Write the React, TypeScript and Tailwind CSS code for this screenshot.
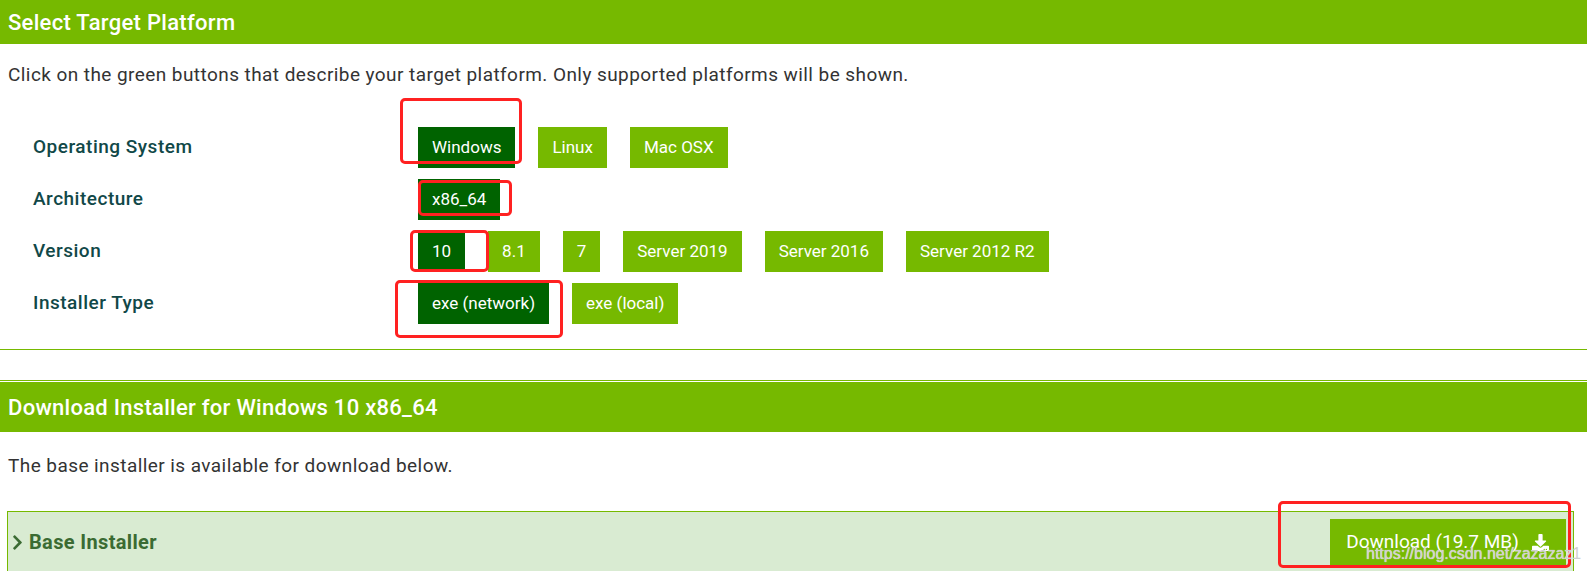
import { FaDownload, FaChevronRight } from 'react-icons/fa';

type Opt = { label: string; active?: boolean };

const rows: { label: string; options: Opt[] }[] = [
  {
    label: 'Operating System',
    options: [{ label: 'Windows', active: true }, { label: 'Linux' }, { label: 'Mac OSX' }],
  },
  { label: 'Architecture', options: [{ label: 'x86_64', active: true }] },
  {
    label: 'Version',
    options: [
      { label: '10', active: true },
      { label: '8.1' },
      { label: '7' },
      { label: 'Server 2019' },
      { label: 'Server 2016' },
      { label: 'Server 2012 R2' },
    ],
  },
  {
    label: 'Installer Type',
    options: [{ label: 'exe (network)', active: true }, { label: 'exe (local)' }],
  },
];

// Marcações vermelhas da captura
const marks = [
  'left-[400px] top-[98px] w-[122px] h-[66px]',
  'left-[418px] top-[180px] w-[94px] h-[36px]',
  'left-[410px] top-[230px] w-[79px] h-[42px]',
  'left-[395px] top-[280px] w-[168px] h-[58px]',
  'left-[1278px] top-[501px] w-[293px] h-[67px]',
];

export default function App() {
  return (
    <div className="relative w-[1587px] h-[571px] overflow-hidden bg-white font-['Roboto',sans-serif]">
      {/* Header */}
      <div className="h-[44px] bg-[#76b900] flex items-center px-2 text-white text-[22px] tracking-[0.3px] font-medium">
        Select Target Platform
      </div>

      {/* Seleção */}
      <div className="border-b border-[#76b900] pb-[25px]">
        <p className="mt-[19px] px-2 text-[19px] tracking-[0.43px] leading-[24px] text-[#333]">
          Click on the green buttons that describe your target platform. Only supported platforms will be shown.
        </p>
        <div className="mt-[40px] flex flex-col gap-[11px]">
          {rows.map((row) => (
            <div key={row.label} className="flex items-center h-[41px]">
              <div className="w-[418px] pl-[33px] text-[19px] tracking-[0.5px] font-medium text-[#114848]">
                {row.label}
              </div>
              <div className="flex gap-[23px] h-full">
                {row.options.map((opt) => (
                  <button
                    key={opt.label}
                    className={`h-full px-[14px] text-white text-[17px] ${
                      opt.active ? 'bg-[#006300]' : 'bg-[#76b900]'
                    }`}
                  >
                    {opt.label}
                  </button>
                ))}
              </div>
            </div>
          ))}
        </div>
      </div>

      {/* Download */}
      <div className="mt-[30px] border-t border-[#76b900] pt-[1px]">
        <div className="h-[50px] bg-[#76b900] flex items-center px-2 text-white text-[22px] tracking-[0.28px] font-medium">
          Download Installer for Windows 10 x86_64
        </div>
      </div>
      <p className="mt-[22px] px-2 text-[19px] tracking-[0.43px] leading-[24px] text-[#333]">
        The base installer is available for download below.
      </p>

      <div className="mt-[33px] ml-[7px] mr-[13px] border border-[#76b900] bg-[#d9ebd2] pt-[7px] pr-[7px] pb-[20px] flex items-start justify-between">
        <div className="h-[46px] flex items-center gap-[5px] pl-[3px] text-[#3b6b33] text-[20px] tracking-[0.35px] font-bold">
          <FaChevronRight className="w-[13px] h-[17px]" />
          Base Installer
        </div>
        <button className="h-[46px] w-[236px] bg-[#76b900] text-white text-[19px] flex items-center justify-center gap-[12px]">
          Download (19.7 MB)
          <FaDownload className="w-[19px] h-[17px]" />
        </button>
      </div>

      {marks.map((m) => (
        <div key={m} className={`absolute ${m} border-[3px] border-[#ff2121] rounded-[5px]`} />
      ))}

      <div className="absolute left-[1366px] top-[542px] text-[16px] font-['Liberation_Sans',sans-serif] text-[#d0d0d0] [text-shadow:0_0_1px_#ffffff]">
        https://blog.csdn.net/zazazaz1
      </div>
    </div>
  );
}
